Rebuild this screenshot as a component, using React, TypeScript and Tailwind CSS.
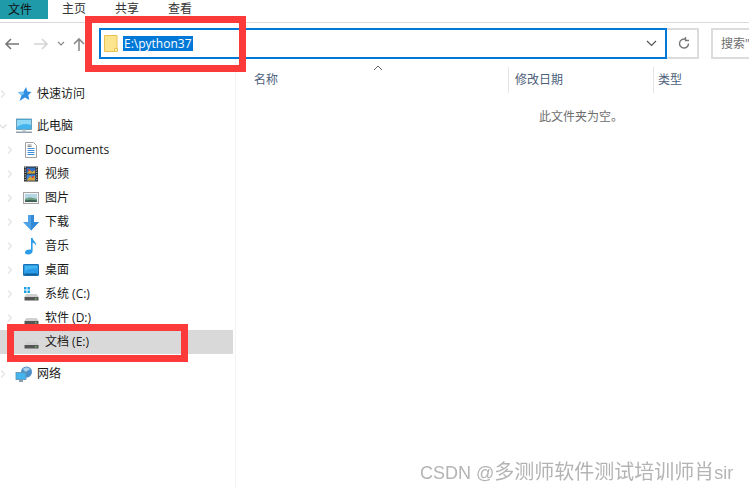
import React from "react";

const font = { fontFamily: '"Open Sans","Noto Sans CJK SC",sans-serif' };

const Chev = ({ open }: { open?: boolean }) => (
  <svg width="8" height="10" viewBox="0 0 8 10" fill="none" stroke={open ? "#dcdcdc" : "#e4e4e4"} strokeWidth="1.2">
    {open ? <path d="M0.5 3.5 4 7 7.5 3.5" /> : <path d="M2 1.5 5.5 5 2 8.500" />}
  </svg>
);

const Star = () => (
  <svg width="16" height="16" viewBox="0 0 16 16">
    <path d="M10 1 11.500 5.500 15.500 6 12.300 9 13.300 14 9 11.500 3.500 15 5.500 9.500 2 6 7.500 5.700z" fill="#2f8fe0" />
    <path d="M2 6 7.500 5.700 8 8 5.500 9.500z" fill="#7cc4f5" />
  </svg>
);

const Pc = () => (
  <svg width="18" height="16" viewBox="0 0 18 16">
    <rect x="1.500" y="1" width="15" height="10.500" fill="#43b4ee" stroke="#5f8fa8" strokeWidth="0.8" />
    <path d="M2 2h14v5C11 5 6 6 2 9z" fill="#8fd8f8" />
    <rect x="7.500" y="11.500" width="3" height="2" fill="#b7c5cd" />
    <rect x="1" y="13.500" width="16" height="1.500" fill="#8fa0aa" />
  </svg>
);

const Doc = () => (
  <svg width="14" height="16" viewBox="0 0 14 16">
    <path d="M1.500 .5h8l3 3v12h-11z" fill="#fff" stroke="#a0a0a0" />
    <path d="M3.500 6.500h7M3.500 8.500h7M3.500 10.500h7M3.500 12.500h7" stroke="#3f8fd8" strokeWidth="1" />
    <path d="M3.500 3h4M3.500 4.500h4" stroke="#666" strokeWidth=".8" />
  </svg>
);

const Film = () => (
  <svg width="14" height="16" viewBox="0 0 14 16">
    <rect x="0" y="0.500" width="14" height="15" fill="#2a2a2a" />
    <rect x="2.500" y="1.500" width="9" height="6" fill="#2e6fbf" />
    <rect x="2.500" y="8.500" width="9" height="6" fill="#3a86d8" />
    <path d="M3 7l3-3 2 2 3-2v3.500H3zM3 14l3-4 2 2 3-2v4.500H3z" fill="#d9a032" />
    <path d="M4 3h2v2H4zM8 10h2v2H8z" fill="#c94a4a" />
    <path d="M1.200 1v14M12.800 1v14" stroke="#ddd" strokeWidth="1" strokeDasharray="1.200 1.200" />
  </svg>
);

const Pic = () => (
  <svg width="16" height="12" viewBox="0 0 16 12">
    <rect x=".5" y=".5" width="15" height="11" fill="#f4f4f4" stroke="#a4a4a4" />
    <rect x="2" y="2" width="12" height="8" fill="#b4d6e4" />
    <path d="M2 7c3-2 6-2 12 0v3H2z" fill="#6f9f84" />
    <path d="M2 8.500c4-1 8-1 12 0V10H2z" fill="#3f6158" />
  </svg>
);

const Down = () => (
  <svg width="16" height="17" viewBox="0 0 16 17">
    <path d="M5 1h6v7h5l-8 8.500L0 8h5z" fill="#4ea2e8" />
    <path d="M8 1h3v7h5l-8 8.500z" fill="#3389d6" />
  </svg>
);

const Music = () => (
  <svg width="14" height="18" viewBox="0 0 14 18">
    <path d="M7 1h1.600c.4 3 4 4 3.600 8-.6-2-2.200-3-3.600-3.200V14c0 2-2 3.500-4.500 3.500C2 17.500 1 16.500 1 15.200 1 13.500 3.500 12 7 12.500z" fill="#2a9be8" />
  </svg>
);

const Desk = () => (
  <svg width="16" height="12" viewBox="0 0 16 12">
    <rect x=".5" y=".5" width="15" height="11" rx=".5" fill="#2a9be8" stroke="#1d6fae" />
    <rect x="1.500" y="9.500" width="13" height="1.500" fill="#0f5f96" />
    <path d="M2 2h12v3C9 4 5 5 2 7.500z" fill="#43b4ee" />
  </svg>
);

const Drive = ({ win }: { win?: boolean }) => (
  <svg width="15" height="14" viewBox="0 0 15 14">
    {win && <path d="M0 0h2.500v2.500H0zM3.500 0H6v2.500H3.500zM0 3.500h2.500V6H0zM3.500 3.500H6V6H3.500z" fill="#1ba1e2" />}
    <path d="M2.500 7h10l2 2.500V10H.5v-.5z" fill="#d0d0d0" />
    <rect x=".5" y="10" width="14" height="3.500" rx=".5" fill="#555" />
    <rect x="11" y="11.200" width="1.500" height="1.200" fill="#6fdc6f" />
  </svg>
);

const Net = () => (
  <svg width="18" height="17" viewBox="0 0 18 17">
    <circle cx="11.500" cy="6" r="5.500" fill="#4a90c8" />
    <path d="M8 3c2-2 5-2 7 0-1 2-3 1-4 3-1-1-2-1-3-3z" fill="#a8d2ea" />
    <rect x="1" y="6.500" width="10" height="7" fill="#43b4ee" stroke="#5f8fa8" strokeWidth=".8" />
    <rect x="4" y="14" width="4" height="2" fill="#8aa0ac" />
  </svg>
);

const Row = ({ icon, label, depth = 1, open, sel, className = "" }: { icon: React.ReactNode; label: string; depth?: number; open?: boolean; sel?: boolean; className?: string }) => (
  <div className={`flex h-6 w-[233px] items-center text-[12px] text-[#1a1a1a] ${sel ? "bg-[#d9d9d9]" : ""} ${className}`}>
    <div className={`flex w-[8px] shrink-0 justify-center ${depth === 1 ? "ml-[6px]" : "ml-[-1px]"}`}>
      {sel ? null : <Chev open={open} />}
    </div>
    <div className="ml-[8px] flex h-[18px] w-[18px] shrink-0 items-center justify-center">{icon}</div>
    <span className={depth === 1 ? "ml-[5px]" : "ml-[4px]"}>{label}</span>
  </div>
);

export default function App() {
  return (
    <div className="relative flex h-[488px] w-[749px] flex-col overflow-hidden bg-white" style={font}>
      {/* ribbon */}
      <div className="flex h-[23px] items-start border-b border-[#dadada] text-[12px] text-[#333]">
        <div className="flex h-[19px] w-[48px] items-center bg-[#1f9aa8] pl-2 text-[#111]">文件</div>
        <div className="ml-[14px] flex h-[18px] w-[24px] items-center">主页</div>
        <div className="ml-[29px] flex h-[18px] w-[24px] items-center">共享</div>
        <div className="ml-[29px] flex h-[18px] w-[24px] items-center">查看</div>
      </div>

      {/* address row */}
      <div className="mt-[5px] flex h-[31px] items-center">
        <svg className="ml-[4px]" width="16" height="14" viewBox="0 0 16 14" fill="none" stroke="#777" strokeWidth="1.600">
          <path d="M15 7H2M7 2 2 7l5 5" />
        </svg>
        <svg className="ml-[13px]" width="16" height="14" viewBox="0 0 16 14" fill="none" stroke="#d4d4d4" strokeWidth="1.600">
          <path d="M1 7h13M9 2l5 5-5 5" />
        </svg>
        <svg className="ml-[8px]" width="8" height="6" viewBox="0 0 8 6" fill="none" stroke="#8a8a8a" strokeWidth="1.200">
          <path d="M1 1l3 3 3-3" />
        </svg>
        <svg className="ml-[8px]" width="12" height="14" viewBox="0 0 12 14" fill="none" stroke="#8a8a8a" strokeWidth="1.600">
          <path d="M6 14V2M1 7l5-5 5 5" />
        </svg>
        <div className="ml-[14px] flex h-[31px] w-[568px] items-center border-2 border-[#0078d7]">
          <svg className="ml-[3px]" width="14" height="17" viewBox="0 0 14 17">
            <path d="M.5.5h12.500v16H.5z" fill="#fde48f" stroke="#e8c14f" />
            <path d="M10.500 13.500h3v3h-3z" fill="#fff3b8" stroke="#e8c14f" />
          </svg>
          <span className="ml-[5px] bg-[#0078d7] px-[1px] text-[12px] leading-[15px] text-white">E:\python37</span>
          <svg className="ml-auto mr-[8px]" width="11" height="7" viewBox="0 0 11 7" fill="none" stroke="#555" strokeWidth="1.200">
            <path d="M1 1l4.500 4.500L10 1" />
          </svg>
        </div>
        <div className="flex h-[31px] w-[32px] items-center justify-center border-2 border-l-0 border-[#dcdcdc] pl-[3px]">
          <svg width="12" height="13" viewBox="0 0 12 13" fill="none" stroke="#777" strokeWidth="1.400">
            <path d="M10.500 6.500a4.500 4.500 0 1 1-3-4.200M7.500 0v3.500H11" />
          </svg>
        </div>
        <div className="ml-[12px] flex h-[31px] flex-1 items-center overflow-hidden whitespace-nowrap border-2 border-r-0 border-[#dcdcdc] pl-[8px] text-[12px] text-[#6d6d6d]">
          搜索"
        </div>
      </div>

      {/* body */}
      <div className="flex min-h-0 flex-1">
        <div className="h-full w-[236px] shrink-0 border-r border-[#f4f4f4] pt-[23px]">
          <Row icon={<Star />} label="快速访问" depth={0} className="mb-2" />
          <Row icon={<Pc />} label="此电脑" depth={0} open />
          <Row icon={<Doc />} label="Documents" />
          <Row icon={<Film />} label="视频" />
          <Row icon={<Pic />} label="图片" />
          <Row icon={<Down />} label="下载" />
          <Row icon={<Music />} label="音乐" />
          <Row icon={<Desk />} label="桌面" />
          <Row icon={<Drive win />} label="系统 (C:)" />
          <Row icon={<Drive />} label="软件 (D:)" />
          <Row icon={<Drive />} label="文档 (E:)" sel />
          <Row icon={<Net />} label="网络" depth={0} className="mt-2" />
        </div>
        <div className="min-w-0 flex-1">
          <div className="relative mt-[8px] flex h-[26px] items-center text-[12px] text-[#4c607a]">
            <span className="ml-[18px] w-[254px]">名称</span>
            <div className="h-[26px] w-px bg-[#e5e5e5]" />
            <span className="ml-[6px] w-[138px]">修改日期</span>
            <div className="h-[26px] w-px bg-[#e5e5e5]" />
            <span className="ml-[4px]">类型</span>
            <svg className="absolute left-[137px] top-[-2px]" width="10" height="6" viewBox="0 0 10 6" fill="none" stroke="#666" strokeWidth="1">
              <path d="M1 5l4-4 4 4" />
            </svg>
          </div>
          <div className="mt-[15px] pl-[303px] text-[12px] leading-[17px] text-[#6d6d6d]">此文件夹为空。</div>
        </div>
      </div>

      {/* annotations */}
      <div className="pointer-events-none absolute left-[85px] top-[16px] h-[56px] w-[161px] border-[7px] border-[#fc3a3a]" />
      <div className="pointer-events-none absolute left-[7px] top-[324px] h-[38px] w-[181px] border-[7px] border-[#fc3a3a]" />
      <div
        className="pointer-events-none absolute left-[420px] top-[457px] whitespace-nowrap text-[18px] text-[#b4b4b4] blur-[0.3px]"
        style={{ fontFamily: '"Liberation Sans","Noto Sans CJK SC",sans-serif' }}
      >
        CSDN @<span className="text-[20px]">多测师软件测试培训师肖</span>sir
      </div>
    </div>
  );
}
